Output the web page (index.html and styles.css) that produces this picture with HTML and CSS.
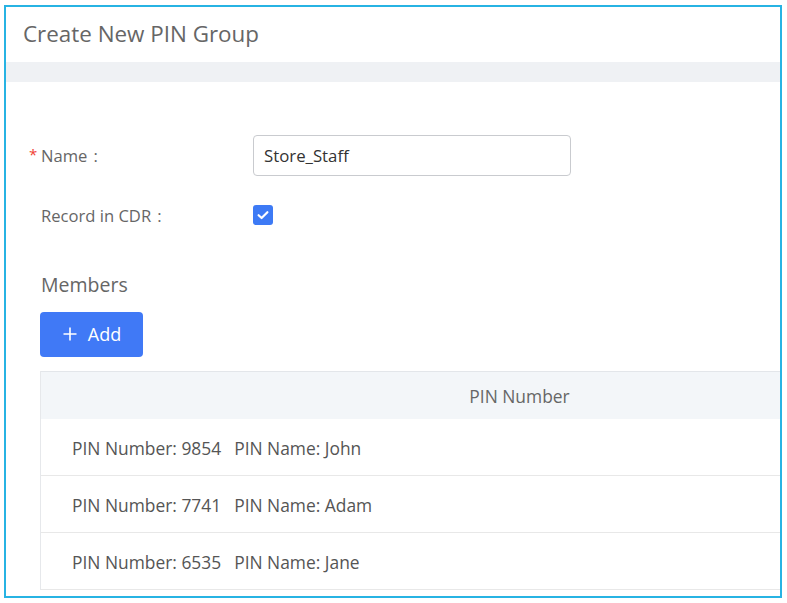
FILE: index.html
```html
<!DOCTYPE html>
<html lang="en">
<head>
<meta charset="utf-8">
<title>Create New PIN Group</title>
<link rel="stylesheet" href="styles.css">
</head>
<body>
<div class="frame">
  <header class="page-head">
    <h1 class="page-title">Create New PIN Group</h1>
  </header>
  <div class="band"></div>
  <main class="form">
    <div class="row row-name">
      <label class="label required">Name<span class="colon">:</span></label>
      <div class="control">
        <div class="input">Store_Staff</div>
      </div>
    </div>
    <div class="row row-cdr">
      <label class="label">Record in CDR<span class="colon">:</span></label>
      <div class="control">
        <span class="checkbox">
          <svg viewBox="0 0 20 20" width="20" height="20" aria-hidden="true">
            <path d="M5.6 10.2 L8.6 13 L14.4 7.2" fill="none" stroke="#fff" stroke-width="2.2" stroke-linecap="round" stroke-linejoin="round"/>
          </svg>
        </span>
      </div>
    </div>
    <h2 class="section-title">Members</h2>
    <button class="btn-add" type="button">
      <svg viewBox="0 0 16 16" width="16" height="16" aria-hidden="true">
        <path d="M8 1.5 V14.5 M1.5 8 H14.5" stroke="#fff" stroke-width="1.6" fill="none"/>
      </svg>
      <span>Add</span>
    </button>
    <div class="table">
      <div class="thead">PIN Number</div>
      <div class="tr"><span class="cell">PIN Number: 9854</span><span class="cell">PIN Name: John</span></div>
      <div class="tr"><span class="cell">PIN Number: 7741</span><span class="cell">PIN Name: Adam</span></div>
      <div class="tr"><span class="cell">PIN Number: 6535</span><span class="cell">PIN Name: Jane</span></div>
    </div>
  </main>
</div>
</body>
</html>
```

FILE: styles.css
```css
* {
  box-sizing: border-box;
}

html, body {
  margin: 0;
  padding: 0;
  background: #ffffff;
}

body {
  font-family: "Open Sans", "Noto Sans", sans-serif;
  color: #666666;
}

.frame {
  margin: 5px 0 0 4px;
  width: 778px;
  height: 593px;
  border: 2px solid #27b3e3;
  overflow: hidden;
  background: #ffffff;
}

.page-head {
  height: 55px;
  display: flex;
  align-items: center;
  padding-left: 17px;
  padding-bottom: 3px;
}

.page-title {
  margin: 0;
  font-size: 22.4px;
  font-weight: 400;
  color: #666666;
  letter-spacing: 0;
}

.band {
  height: 20px;
  background: #eff1f4;
}

.form {
  padding: 53px 0 0 35px;
}

.row {
  display: flex;
  align-items: center;
}

.row-name {
  height: 41px;
}

.row-cdr {
  margin-top: 20px;
  height: 38px;
}

.label {
  width: 212px;
  font-size: 16.6px;
  color: #666666;
  position: relative;
}

.colon {
  margin-left: 6px;
}

.label.required::before {
  content: "*";
  position: absolute;
  left: -12px;
  top: 0;
  color: #f04134;
  font-size: 15px;
}

.input {
  width: 318px;
  height: 41px;
  border: 1px solid #c9cbcf;
  border-radius: 4px;
  padding: 0 10px;
  display: flex;
  align-items: center;
  font-size: 16.8px;
  color: #333333;
}

.checkbox {
  display: flex;
  width: 20px;
  height: 20px;
  border-radius: 3px;
  background: #3d7af5;
}

.section-title {
  margin: 0;
  margin-top: 32px;
  height: 36px;
  display: flex;
  align-items: center;
  font-size: 19.5px;
  font-weight: 400;
  color: #666666;
}

.btn-add {
  margin: 10px 0 0 -1px;
  width: 103px;
  height: 45px;
  border: none;
  border-radius: 4px;
  background: #4079f6;
  color: #ffffff;
  display: flex;
  align-items: center;
  justify-content: center;
  gap: 10px;
  font-family: inherit;
  font-size: 18px;
  padding: 0 0 1px 0;
}

.table {
  margin: 14px 0 0 -1px;
  width: 958px;
  border-left: 1px solid #e6e8eb;
}

.thead {
  height: 48px;
  background: #f3f6f9;
  border-top: 1px solid #e3e6ea;
  display: flex;
  align-items: center;
  justify-content: center;
  font-size: 17.4px;
  color: #666666;
}

.tr {
  height: 57px;
  border-bottom: 1px solid #e8e8e8;
  display: flex;
  align-items: center;
  padding: 2px 0 0 31px;
  gap: 13px;
  font-size: 17.4px;
  color: #555555;
}
```
